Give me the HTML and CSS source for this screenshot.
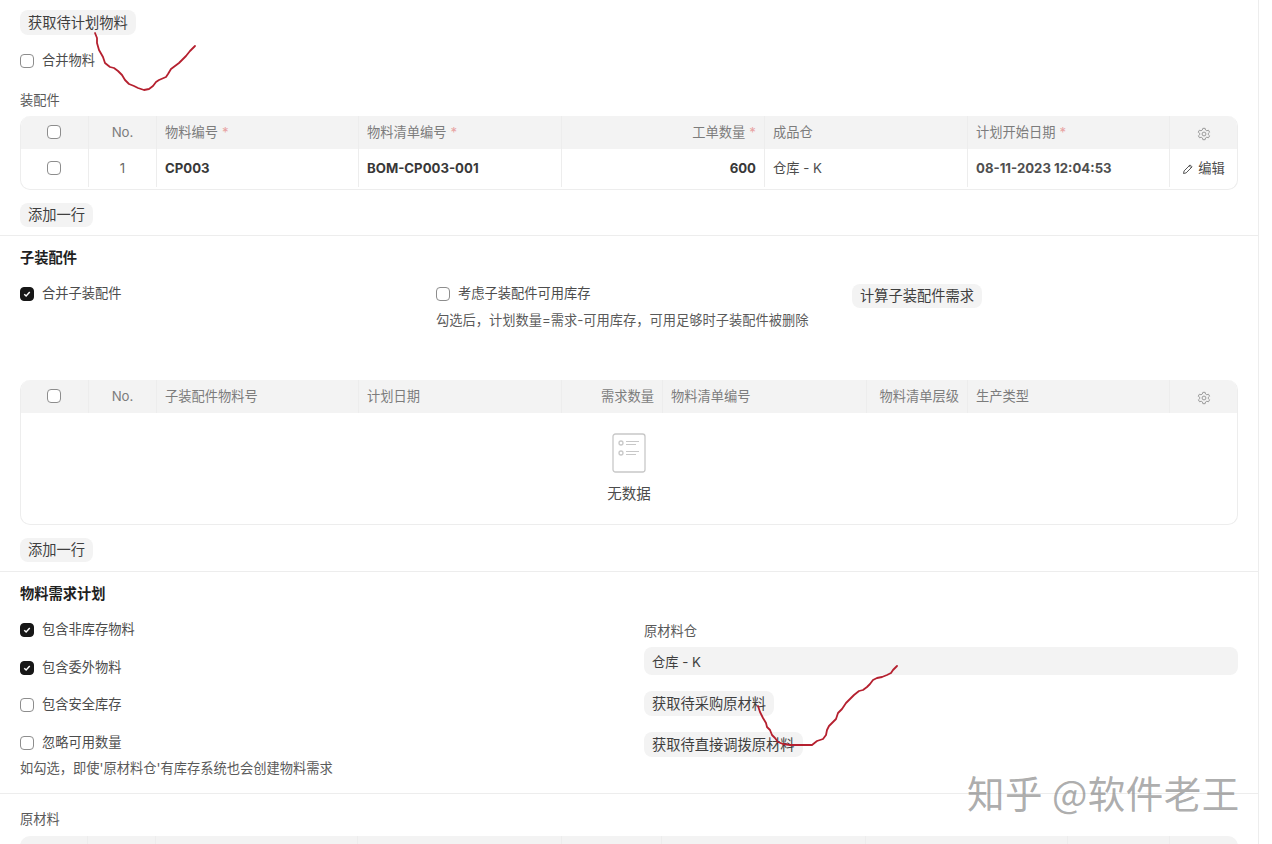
FILE: index.html
```html
<!DOCTYPE html>
<html lang="zh">
<head>
<meta charset="utf-8">
<title>生产计划</title>
<link rel="stylesheet" href="styles.css">
</head>
<body>
<main class="page">
  <section class="sec sec-a">
    <button class="btn">获取待计划物料</button>
    <label class="check check-merge"><span class="cb"></span><span class="txt">合并物料</span></label>
    <div class="field-label label-assy">装配件</div>
    <div class="grid">
      <div class="row head cols-a">
        <div class="cell center"><span class="cb"></span></div>
        <div class="cell center">No.</div>
        <div class="cell">物料编号<i class="req">*</i></div>
        <div class="cell">物料清单编号<i class="req">*</i></div>
        <div class="cell right">工单数量<i class="req">*</i></div>
        <div class="cell">成品仓</div>
        <div class="cell">计划开始日期<i class="req">*</i></div>
        <div class="cell center"><svg class="gear" viewBox="0 0 16 16"><path d="M6.700 1.500h2.600l.4 1.900 1.500.9 1.900-.6 1.300 2.200-1.500 1.300v1.600l1.500 1.300-1.300 2.200-1.900-.6-1.500.9-.4 1.900H6.700l-.4-1.900-1.500-.9-1.900.6-1.300-2.200 1.500-1.300V7.200L1.400 5.900l1.300-2.200 1.900.6 1.500-.9z"/><circle cx="8" cy="8" r="2.200"/></svg></div>
      </div>
      <div class="row body cols-a">
        <div class="cell center"><span class="cb"></span></div>
        <div class="cell center num">1</div>
        <div class="cell strong">CP003</div>
        <div class="cell strong">BOM-CP003-001</div>
        <div class="cell right strong">600</div>
        <div class="cell plain">仓库 - K</div>
        <div class="cell strong soft">08-11-2023 12:04:53</div>
        <div class="cell center plain edit"><svg class="pen" viewBox="0 0 12 12"><path d="M1.500 10.500l.6-2.600 6-6 2 2-6 6zM7.200 2.800l2 2"/></svg>编辑</div>
      </div>
    </div>
    <button class="btn btn-add">添加一行</button>
  </section>

  <section class="sec sec-b">
    <h2 class="title">子装配件</h2>
    <div class="three">
      <div><label class="check"><span class="cb on"><svg viewBox="0 0 14 14"><path d="M3.800 7.200l2.200 2.200 4.200-4.600"/></svg></span><span class="txt">合并子装配件</span></label></div>
      <div>
        <label class="check"><span class="cb"></span><span class="txt">考虑子装配件可用库存</span></label>
        <p class="hint hint-b">勾选后，计划数量=需求-可用库存，可用足够时子装配件被删除</p>
      </div>
      <div class="calc-col"><button class="btn btn-calc">计算子装配件需求</button></div>
    </div>
    <div class="grid">
      <div class="row head cols-b">
        <div class="cell center"><span class="cb"></span></div>
        <div class="cell center">No.</div>
        <div class="cell">子装配件物料号</div>
        <div class="cell">计划日期</div>
        <div class="cell right">需求数量</div>
        <div class="cell">物料清单编号</div>
        <div class="cell right">物料清单层级</div>
        <div class="cell">生产类型</div>
        <div class="cell center"><svg class="gear" viewBox="0 0 16 16"><path d="M6.700 1.500h2.600l.4 1.900 1.500.9 1.900-.6 1.300 2.200-1.500 1.300v1.600l1.500 1.300-1.300 2.200-1.900-.6-1.500.9-.4 1.900H6.700l-.4-1.900-1.500-.9-1.900.6-1.300-2.200 1.500-1.300V7.200L1.400 5.900l1.300-2.200 1.900.6 1.500-.9z"/><circle cx="8" cy="8" r="2.200"/></svg></div>
      </div>
      <div class="empty">
        <svg class="doc" viewBox="0 0 34 40"><rect x="1" y="1" width="32" height="38" rx="2.500"/><circle cx="9" cy="10" r="2"/><circle cx="9" cy="20" r="2"/><path d="M14 8.500h13M14 11.500h10M14 18.500h13M14 21.500h10"/></svg>
        <span>无数据</span>
      </div>
    </div>
    <button class="btn btn-add">添加一行</button>
  </section>

  <section class="sec sec-c">
    <h2 class="title">物料需求计划</h2>
    <div class="two">
      <div class="col-checks">
        <label class="check"><span class="cb on"><svg viewBox="0 0 14 14"><path d="M3.800 7.200l2.200 2.200 4.200-4.600"/></svg></span><span class="txt">包含非库存物料</span></label>
        <label class="check"><span class="cb on"><svg viewBox="0 0 14 14"><path d="M3.800 7.200l2.200 2.200 4.200-4.600"/></svg></span><span class="txt">包含委外物料</span></label>
        <label class="check check-third"><span class="cb"></span><span class="txt">包含安全库存</span></label>
        <label class="check"><span class="cb"></span><span class="txt">忽略可用数量</span></label>
        <p class="hint hint-c">如勾选，即使'原材料仓'有库存系统也会创建物料需求</p>
      </div>
      <div class="col-store">
        <div class="field-label">原材料仓</div>
        <div class="input">仓库 - K</div>
        <button class="btn btn-buy">获取待采购原材料</button>
        <button class="btn btn-move">获取待直接调拨原材料</button>
      </div>
    </div>
  </section>

  <section class="sec sec-d">
    <div class="field-label">原材料</div>
    <div class="grid grid-cut">
      <div class="row head cols-c">
        <div class="cell"></div><div class="cell"></div><div class="cell"></div><div class="cell"></div><div class="cell"></div><div class="cell"></div><div class="cell"></div><div class="cell"></div><div class="cell"></div>
      </div>
    </div>
  </section>
</main>

<svg class="scribble" viewBox="0 0 1272 844" aria-hidden="true">
  <path d="M95 33L97 38L97 43L99 50L103 57L105 63L110 67L114 68L118 71L122 75L125 80L129 84L134 86L138 88L144 90L149 89L153 86L156 82L159 80L166 77L168 74L171 69L175 66L179 63L182 60L186 56L190 51L195 46"/>
  <path d="M758 706L760 712L763 718L766 723L767 727L770 730L772 735L775 738L778 742L783 744L790 745L800 745L812 745L817 741L823 739L826 735L827 730L829 726L833 722L836 719L838 713L842 709L846 703L850 699L854 695L859 691L863 690L867 687L870 684L873 680L877 678L882 677L887 675L891 673L893 670L897 666"/>
</svg>
<div class="mark">知乎 @软件老王</div>
</body>
</html>
```

FILE: styles.css
```css
* { box-sizing: border-box; }
html, body { margin: 0; height: 100%; overflow: hidden; background: #fff; }
body {
  position: relative;
  font-family: Inter, "Noto Sans CJK SC", sans-serif;
  font-size: 13.25px;
  line-height: 18px;
  color: #4c4c4c;
}
.page { width: 1259px; height: 844px; border-right: 1px solid #ededed; overflow: hidden; }
.sec { padding: 0 20px; border-bottom: 1px solid #ededed; }
.sec-a { height: 236px; padding-top: 10px; }
.sec-b { height: 336px; padding-top: 13px; }
.sec-c { height: 222px; padding-top: 13px; }
.sec-d { border-bottom: 0; padding-top: 16px; }

.btn {
  display: block;
  height: 25px;
  padding: 0 8px;
  border: 0;
  border-radius: 8px;
  background: #f3f3f3;
  color: #3f3f3f;
  font: inherit;
  font-size: 14.250px;
  white-space: nowrap;
}
.btn-add { margin-top: 13px; height: 24px; }
.btn-calc { height: 24px; margin-top: -1px; }
.btn-buy { margin-top: 16px; }
.btn-move { margin-top: 16px; }

.check { display: flex; align-items: center; gap: 8px; height: 18px; color: #4c4c4c; white-space: nowrap; }
.check-merge { margin-top: 17px; }
.txt { margin-bottom: 2px; }
.cb {
  display: block;
  flex: none;
  width: 14px;
  height: 14px;
  border: 1px solid #8d8d8d;
  border-radius: 4px;
  background: #fff;
}
.cb.on { background: #171717; border-color: #171717; }
.cb.on svg { display: block; width: 12px; height: 12px; fill: none; stroke: #fff; stroke-width: 1.700; }

.field-label { color: #5a5a5a; }
.label-assy { margin-top: 21px; margin-bottom: 7px; }

.grid {
  border: 1px solid #ededed;
  border-top: 0;
  border-radius: 10px;
  overflow: hidden;
}
.row { display: grid; }
.cols-a { grid-template-columns: 68px 68px 202px 203px 203px 203px 202px 1fr; }
.body.cols-a { grid-template-columns: 67px 68px 202px 203px 203px 203px 202px 1fr; }
.cols-b { grid-template-columns: 68px 68px 202px 203px 101px 204px 101px 202px 1fr; }
.cols-c { grid-template-columns: 68px 68px 202px 204px 100px 204px 202px 102px 1fr; }
.head { height: 33px; background: #f3f3f3; color: #7c7c7c; margin: 0 -1px; }
.head .cell { padding-bottom: 2px; }
.body { height: 40px; }
.cell {
  display: flex;
  align-items: center;
  min-width: 0;
  padding: 0 8px;
  border-left: 1px solid #ededed;
  white-space: nowrap;
}
.cell:first-child { border-left: 0; }
.body .cell { height: 38px; }
.body .cell:first-child { padding-right: 9px; }
.center { justify-content: center; }
.right { justify-content: flex-end; }
.num { color: #6b6b6b; }
.strong { font-weight: 700; font-size: 13.200px; color: #383838; }
.soft { color: #4f4f4f; }
.plain { color: #4c4c4c; }
.req { font-style: normal; color: #e8a3a3; margin-left: 4px; }
.gear { width: 14px; height: 14px; margin-top: 5px; fill: none; stroke: #8f8f8f; stroke-width: 1; }
.pen { width: 12px; height: 12px; margin-right: 4px; margin-top: 2px; fill: none; stroke: #555; stroke-width: 1; }

.title { margin: 0; font-size: 14.250px; line-height: 18px; font-weight: 700; color: #1f1f1f; }
.three { display: grid; grid-template-columns: 416px 416px 1fr; height: 94px; margin-top: 18px; margin-bottom: 1px; }
.hint { margin: 0; color: #5a5a5a; white-space: nowrap; }
.hint-b { margin-top: 8px; }
.empty {
  height: 111px;
  display: flex;
  flex-direction: column;
  align-items: center;
  padding-top: 20px;
  color: #4c4c4c;
}
.doc { width: 34px; height: 40px; fill: none; stroke: #c8c8c8; stroke-width: 1.300; }
.doc path { stroke-width: 1; }
.empty span { margin-top: 12px; font-size: 14.500px; }

.two { display: grid; grid-template-columns: 624px 1fr; margin-top: 18px; }
.col-checks { display: flex; flex-direction: column; }
.col-checks .check + .check { margin-top: 20px; }
.col-checks .check-third + .check { margin-top: 20px; }
.col-checks .check + .check-third { margin-top: 19px; }
.col-checks .hint-c { margin-top: 7px; }
.col-store { padding-top: 1px; }
.input {
  display: flex;
  align-items: center;
  height: 28px;
  margin-top: 7px;
  padding: 1px 8px 0;
  border-radius: 8px;
  background: #f3f3f3;
  color: #3f3f3f;
}
.grid-cut { margin-top: 8px; border: 0; }

.scribble { position: absolute; left: 0; top: 0; width: 1272px; height: 844px; pointer-events: none; }
.scribble path { fill: none; stroke: #b5202f; stroke-width: 1.800; stroke-linejoin: round; stroke-linecap: round; }
.mark {
  position: absolute;
  left: 967px;
  top: 769px;
  font-family: "Noto Sans CJK SC", sans-serif;
  font-size: 37.500px;
  line-height: 46px;
  color: rgba(120, 120, 120, .62);
  white-space: nowrap;
  letter-spacing: .5px;
}
```
